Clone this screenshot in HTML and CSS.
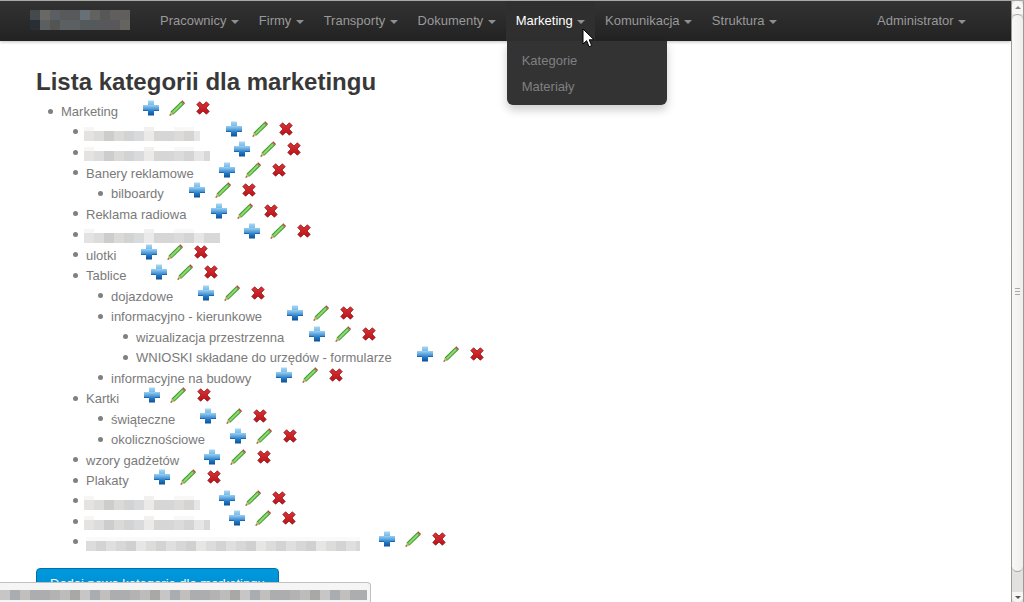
FILE: index.html
```html
<!DOCTYPE html>
<html lang="pl">
<head>
<meta charset="utf-8">
<title>Lista kategorii dla marketingu</title>
<link rel="stylesheet" href="styles.css">
</head>
<body>
<svg class="defs" aria-hidden="true">
  <defs>
    <linearGradient id="gp" x1="0" y1="0" x2="0" y2="1">
      <stop offset="0" stop-color="#a9d6f3"/>
      <stop offset="0.36" stop-color="#6cb6e8"/>
      <stop offset="0.66" stop-color="#2a80cb"/>
      <stop offset="1" stop-color="#0b5199"/>
    </linearGradient>
    <linearGradient id="gb" x1="0" y1="0" x2="0" y2="1">
      <stop offset="0" stop-color="#9ad0f2"/>
      <stop offset="1" stop-color="#2a7fcb"/>
    </linearGradient>
    <linearGradient id="gx" x1="0" y1="0" x2="0" y2="1">
      <stop offset="0" stop-color="#dc3436"/>
      <stop offset="1" stop-color="#b81218"/>
    </linearGradient>
    <symbol id="plus" viewBox="0 0 16 16">
      <path d="M5 0.500h6v4.500h5v6h-5v4.500h-6v-4.500h-5v-6h5z" fill="url(#gp)"/>
      <path d="M0 5h16v6h-16z" fill="url(#gb)"/>
      <path d="M0 10.300h5v0.700h-5zM11 10.300h5v0.700h-5z" fill="#155fa8"/>
    </symbol>
    <symbol id="pencil" viewBox="0 0 16 16">
      <path d="M0.500 15.800l1.200-4.200 3 3z" fill="#d8b06a"/>
      <path d="M1.700 11.600l10.500-10.400 3 3-10.700 10.400z" fill="#3f9a34"/>
      <path d="M2.900 11.900l9.500-9.500 1.500 1.500-9.500 9.500z" fill="#8ed96c"/>
      <path d="M12.200 1.200l1.100-1 2.700 2.800-0.800 1.200z" fill="#b9403a"/>
      <path d="M0.500 15.800l0.500-1.800 1.300 1.300z" fill="#4a4a4a"/>
    </symbol>
    <symbol id="cross" viewBox="0 0 16 16">
      <path d="M4.600 1.800l3.400 3.200 3.400-3.200 2.800 2.800-3.200 3.400 3.200 3.400-2.800 2.800-3.400-3.200-3.400 3.200-2.800-2.800 3.200-3.400-3.200-3.400z" fill="url(#gx)" stroke="#8f1015" stroke-width="0.800"/>
    </symbol>
  </defs>
</svg>

<div class="window">
  <div class="page">
    <header class="navbar">
      <div class="brand" aria-hidden="true"></div>
      <nav class="nav">
        <a class="nav-item">Pracownicy<i class="caret"></i></a>
        <a class="nav-item">Firmy<i class="caret"></i></a>
        <a class="nav-item">Transporty<i class="caret"></i></a>
        <a class="nav-item">Dokumenty<i class="caret"></i></a>
        <div class="nav-item active">Marketing<i class="caret"></i>
          <div class="dropdown">
            <a class="dropdown-item">Kategorie</a>
            <a class="dropdown-item">Materiały</a>
          </div>
        </div>
        <a class="nav-item">Komunikacja<i class="caret"></i></a>
        <a class="nav-item">Struktura<i class="caret"></i></a>
      </nav>
      <a class="nav-item user">Administrator<i class="caret"></i></a>
    </header>

    <main class="content">
      <h1>Lista kategorii dla marketingu</h1>
      <ul class="tree">
        <li>Marketing<span class="acts"><svg class="ic"><use href="#plus"/></svg><svg class="ic"><use href="#pencil"/></svg><svg class="ic"><use href="#cross"/></svg></span>
          <ul>
            <li><span class="blur b1"></span><span class="acts"><svg class="ic"><use href="#plus"/></svg><svg class="ic"><use href="#pencil"/></svg><svg class="ic"><use href="#cross"/></svg></span></li>
            <li><span class="blur b2"></span><span class="acts"><svg class="ic"><use href="#plus"/></svg><svg class="ic"><use href="#pencil"/></svg><svg class="ic"><use href="#cross"/></svg></span></li>
            <li>Banery reklamowe<span class="acts"><svg class="ic"><use href="#plus"/></svg><svg class="ic"><use href="#pencil"/></svg><svg class="ic"><use href="#cross"/></svg></span>
              <ul>
                <li>bilboardy<span class="acts"><svg class="ic"><use href="#plus"/></svg><svg class="ic"><use href="#pencil"/></svg><svg class="ic"><use href="#cross"/></svg></span></li>
              </ul>
            </li>
            <li>Reklama radiowa<span class="acts"><svg class="ic"><use href="#plus"/></svg><svg class="ic"><use href="#pencil"/></svg><svg class="ic"><use href="#cross"/></svg></span></li>
            <li><span class="blur b3"></span><span class="acts"><svg class="ic"><use href="#plus"/></svg><svg class="ic"><use href="#pencil"/></svg><svg class="ic"><use href="#cross"/></svg></span></li>
            <li>ulotki<span class="acts"><svg class="ic"><use href="#plus"/></svg><svg class="ic"><use href="#pencil"/></svg><svg class="ic"><use href="#cross"/></svg></span></li>
            <li>Tablice<span class="acts"><svg class="ic"><use href="#plus"/></svg><svg class="ic"><use href="#pencil"/></svg><svg class="ic"><use href="#cross"/></svg></span>
              <ul>
                <li>dojazdowe<span class="acts"><svg class="ic"><use href="#plus"/></svg><svg class="ic"><use href="#pencil"/></svg><svg class="ic"><use href="#cross"/></svg></span></li>
                <li>informacyjno - kierunkowe<span class="acts"><svg class="ic"><use href="#plus"/></svg><svg class="ic"><use href="#pencil"/></svg><svg class="ic"><use href="#cross"/></svg></span>
                  <ul>
                    <li>wizualizacja przestrzenna<span class="acts"><svg class="ic"><use href="#plus"/></svg><svg class="ic"><use href="#pencil"/></svg><svg class="ic"><use href="#cross"/></svg></span></li>
                    <li>WNIOSKI składane do urzędów - formularze<span class="acts"><svg class="ic"><use href="#plus"/></svg><svg class="ic"><use href="#pencil"/></svg><svg class="ic"><use href="#cross"/></svg></span></li>
                  </ul>
                </li>
                <li>informacyjne na budowy<span class="acts"><svg class="ic"><use href="#plus"/></svg><svg class="ic"><use href="#pencil"/></svg><svg class="ic"><use href="#cross"/></svg></span></li>
              </ul>
            </li>
            <li>Kartki<span class="acts"><svg class="ic"><use href="#plus"/></svg><svg class="ic"><use href="#pencil"/></svg><svg class="ic"><use href="#cross"/></svg></span>
              <ul>
                <li>świąteczne<span class="acts"><svg class="ic"><use href="#plus"/></svg><svg class="ic"><use href="#pencil"/></svg><svg class="ic"><use href="#cross"/></svg></span></li>
                <li>okolicznościowe<span class="acts"><svg class="ic"><use href="#plus"/></svg><svg class="ic"><use href="#pencil"/></svg><svg class="ic"><use href="#cross"/></svg></span></li>
              </ul>
            </li>
            <li>wzory gadżetów<span class="acts"><svg class="ic"><use href="#plus"/></svg><svg class="ic"><use href="#pencil"/></svg><svg class="ic"><use href="#cross"/></svg></span></li>
            <li>Plakaty<span class="acts"><svg class="ic"><use href="#plus"/></svg><svg class="ic"><use href="#pencil"/></svg><svg class="ic"><use href="#cross"/></svg></span></li>
            <li><span class="blur b4"></span><span class="acts"><svg class="ic"><use href="#plus"/></svg><svg class="ic"><use href="#pencil"/></svg><svg class="ic"><use href="#cross"/></svg></span></li>
            <li><span class="blur b5"></span><span class="acts"><svg class="ic"><use href="#plus"/></svg><svg class="ic"><use href="#pencil"/></svg><svg class="ic"><use href="#cross"/></svg></span></li>
            <li><span class="blur b6"></span><span class="acts"><svg class="ic"><use href="#plus"/></svg><svg class="ic"><use href="#pencil"/></svg><svg class="ic"><use href="#cross"/></svg></span></li>
          </ul>
        </li>
      </ul>
      <a class="btn">Dodaj nową kategorię dla marketingu</a>
    </main>
  </div>

  <aside class="scrollbar" aria-hidden="true">
    <div class="sb-btn"><i class="arrow-up"></i></div>
    <div class="sb-thumb"><i class="grip"></i></div>
    <div class="sb-trough"></div>
    <div class="sb-btn sb-btn-end"><i class="arrow-down"></i></div>
  </aside>

  <div class="status" aria-hidden="true"><div class="status-blur"></div></div>

  <svg class="cursor" viewBox="0 0 14 20" aria-hidden="true">
    <path d="M1 1v15l3.600-3.300 2.500 6 2.600-1.100-2.500-5.800h4.800z" fill="#fff" stroke="#000" stroke-width="1"/>
  </svg>
</div>
</body>
</html>
```
FILE: styles.css
```css
* { box-sizing: border-box; }
html, body { margin: 0; height: 100%; overflow: hidden; background: #fff; }
body { font: 13px/18px "Liberation Sans", Arial, sans-serif; color: #7a7a7a; }
.defs { position: absolute; width: 0; height: 0; }

.window { position: relative; display: flex; height: 602px; border-top: 1px solid #a8a8a8; }
.page { flex: 1; min-width: 0; overflow: hidden; }

/* navbar */
.navbar {
  display: flex; align-items: stretch; height: 40px; padding-right: 35px;
  background: linear-gradient(#333, #222);
  box-shadow: 0 1px 3px rgba(0,0,0,.25);
  position: relative; z-index: 2;
}
.brand {
  width: 100px; height: 20px; margin: 9px 20px 0 30px;
  background:
    linear-gradient(90deg, #43494c 0 10px, #6a6865 10px 20px, #595f63 20px 30px, #58595a 30px 50px, #667076 50px 60px, #63625f 60px 70px, #565757 70px 80px, #615f5d 80px 100px) 0 0 / 100% 10px no-repeat,
    linear-gradient(90deg, #282e34 0 10px, #5c5f60 10px 20px, #545552 20px 30px, #5b6063 30px 50px, #54595c 50px 70px, #58585a 70px 90px, #66645f 90px 100px) 0 10px / 100% 10px no-repeat;
}
.nav { display: flex; }
.nav-item {
  position: relative; display: flex; align-items: center; padding: 0 10px;
  color: #999; white-space: nowrap; height: 40px; cursor: pointer;
}
.nav-item.active { color: #fff; background: #2f2f2f; }
.user { margin-left: auto; }
.caret {
  display: inline-block; width: 0; height: 0; margin: 1px 0 0 4.33px;
  border-left: 4px solid transparent; border-right: 4px solid transparent; border-top: 4px solid #8f8f8f;
}

/* dropdown */
.dropdown {
  position: absolute; top: 40px; left: 1px; width: 160px; height: 64px; padding: 7px 0 0;
  background: #333; border-radius: 0 0 6px 6px;
  box-shadow: 0 5px 10px rgba(0,0,0,.2);
}
.dropdown-item { display: block; padding: 4px 15px; height: 26px; color: #808080; }

/* content */
.content { padding: 23px 0 0 36px; }
h1 { margin: 0 0 2px; font-size: 24px; line-height: 36px; font-weight: bold; color: #383838; }
.tree, .tree ul { margin: 0; padding: 0 0 0 25px; list-style: none; line-height: 20.5px; }
.tree li::before {
  content: ""; display: inline-block; width: 5px; height: 5px; margin: 0 8px 0 -13px;
  vertical-align: 2.5px; border-radius: 50%; background: #808080;
}
.acts { margin-left: 25px; }
.ic { width: 16px; height: 16px; margin: -4px 10px 0 0; vertical-align: 0; }

.blur {
  display: inline-block; height: 14px; vertical-align: -4px; margin-left: -2px;
  background:
    linear-gradient(90deg, #e4e3e1 0 10px, #dcdcdc 10px 20px, #cdcdcb 20px 30px, #dbdad8 30px 40px, #d2d3d3 40px 50px, #d9dadb 50px 60px, #ebeae8 60px 70px, #d6d6d6 70px 90px, #dbdbdc 90px 100px, #d5d4d2 100px 110px, #e6e6e6 110px 120px, #d8d8d8 120px 136px) 0 4px / 136px 10px no-repeat,
    linear-gradient(90deg, #f6f6f6 0 10px, #fff 10px 60px, #f1f1f1 60px 70px, #fff 70px 90px, #f8f8f8 90px 110px, #fff 110px) 0 0 / 100% 4px no-repeat;
}
.b1 { width: 116px; margin-right: 1px; }
.b2 { width: 126px; margin-right: -1px; }
.b3 { width: 136px; margin-right: -1px; }
.b4 { width: 116px; margin-right: -6px; }
.b5 { width: 126px; margin-right: -6px; }
.b6 {
  width: 274px; margin-left: 0; margin-right: -6px;
  background:
    repeating-linear-gradient(90deg, #dcdcda 0 10px, #d3d3d3 10px 20px, #dfdfdd 20px 30px, #d6d7d7 30px 40px, #cfd0cf 40px 50px, #e6e6e4 50px 60px) 0 4px / 100% 10px no-repeat,
    linear-gradient(#fafafa, #fafafa) 0 0 / 100% 4px no-repeat;
}

.btn {
  display: inline-block; margin-top: 15px; padding: 6px 13px 6px; color: #fff; white-space: nowrap;
  background: linear-gradient(#0099dd, #0088cc); border: 1px solid #0070ad; border-radius: 4px;
}

/* scrollbar */
.scrollbar {
  display: flex; flex-direction: column; flex: 0 0 13px; height: 601px;
  border-left: 1px solid #9a9a9a; border-right: 1px solid #9a9a9a; background: #e2e1df;
}
.sb-btn { flex: 0 0 13px; display: flex; justify-content: center; align-items: center; background: #f7f6f5; border-radius: 5px 5px 0 0; }
.sb-btn-end { flex-basis: 10px; border-radius: 0 0 5px 5px; }
.arrow-up { border-left: 3px solid transparent; border-right: 3px solid transparent; border-bottom: 3px solid #888; }
.arrow-down { border-left: 3px solid transparent; border-right: 3px solid transparent; border-top: 3px solid #555; }
.sb-thumb {
  flex: 0 0 558px; padding-top: 273px; display: flex; justify-content: center; align-items: flex-start;
  background: linear-gradient(90deg, #f9f8f8, #efeeec); border-radius: 6px; border-top: 1px solid #a5a5a5; border-bottom: 1px solid #a5a5a5;
}
.grip { width: 5px; height: 8px; background: repeating-linear-gradient(#a8a8a8 0 1px, transparent 1px 3px); }
.sb-trough { flex: 1; }

/* overlays */
.status {
  position: absolute; left: 0; bottom: 0; width: 371px; height: 20px; padding: 7px 3px 0 0;
  background: #f5f5f5; border: 1px solid #c0c0c0; border-width: 1px 1px 0 0; border-radius: 0 4px 0 0;
}
.status-blur {
  height: 10px;
  background: repeating-linear-gradient(90deg, #c6c6c6 0 10px, #a9adb0 10px 20px, #c1bfbd 20px 30px, #abadaf 30px 50px, #b3b3b3 50px 60px, #bcbcbc 60px 70px, #a8a8a6 70px 80px);
}
.cursor { position: absolute; left: 582px; top: 27px; width: 14px; height: 20px; z-index: 5; }
```
